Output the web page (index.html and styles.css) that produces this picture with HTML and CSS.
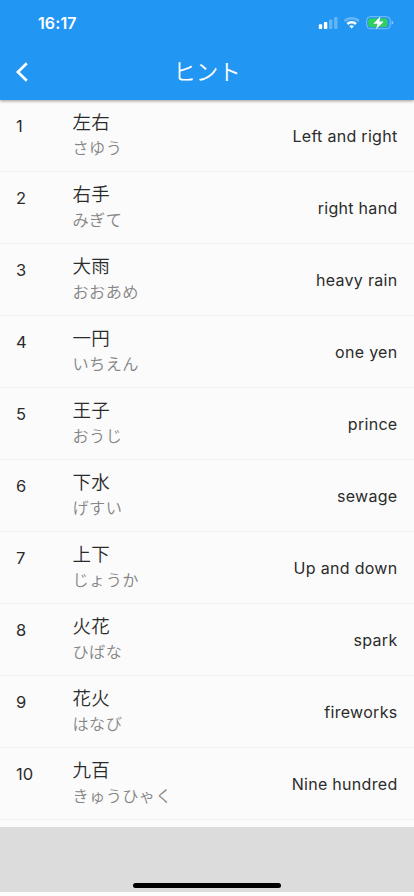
FILE: index.html
```
<!DOCTYPE html>
<html lang="ja">
<head>
<meta charset="utf-8">
<title>ヒント</title>
<link rel="stylesheet" href="styles.css">
</head>
<body>
<header class="top">
  <div class="status">
    <span class="time">16:17</span>
    <svg class="signals" width="76" height="16" viewBox="0 0 76 16" fill="#fff">
      <rect x="0.8" y="9.2" width="3.4" height="4.8" rx="0.8"/>
      <rect x="5.9" y="7" width="3.4" height="7" rx="0.8"/>
      <rect x="11" y="4.4" width="3.4" height="9.6" rx="0.8" opacity=".3"/>
      <rect x="16.1" y="2" width="3.4" height="12" rx="0.8" opacity=".3"/>
      <g fill="none" stroke="#fff" stroke-width="2.5">
        <path d="M26.5 6.1a10.4 10.4 0 0 1 14.4 0" opacity=".3"/>
        <path d="M29.4 9a6.2 6.2 0 0 1 8.6 0"/>
      </g>
      <path d="M31.3 11.1q2.4-1.8 4.8 0l-2.4 2.5z"/>
      <rect x="48.7" y="1.7" width="23.6" height="12" rx="3.6" fill="none" stroke="#fff" opacity=".4"/>
      <path d="M73.6 5.7q1.8.6 1.8 2t-1.8 2z" opacity=".45"/>
      <rect x="50.4" y="3.4" width="19" height="8.6" rx="2" fill="#30d158"/>
      <path d="M62.6 1.2l-7.4 7.5h4.3l-1.7 5.9 8-8h-4.5z" stroke="#2196f3" stroke-width=".4" paint-order="stroke"/>
    </svg>
  </div>
  <div class="nav">
    <svg class="back" width="16" height="22" viewBox="0 0 16 22"><path d="M12.8 2.3L3.9 11l8.9 8.7" fill="none" stroke="#fff" stroke-width="2.7"/></svg>
    <h1>ヒント</h1>
  </div>
</header>
<main>
  <div class="row"><span class="num">1</span><div class="word"><b>左右</b><i>さゆう</i></div><span class="en">Left and right</span></div>
  <div class="row"><span class="num">2</span><div class="word"><b>右手</b><i>みぎて</i></div><span class="en">right hand</span></div>
  <div class="row"><span class="num">3</span><div class="word"><b>大雨</b><i>おおあめ</i></div><span class="en">heavy rain</span></div>
  <div class="row"><span class="num">4</span><div class="word"><b>一円</b><i>いちえん</i></div><span class="en">one yen</span></div>
  <div class="row"><span class="num">5</span><div class="word"><b>王子</b><i>おうじ</i></div><span class="en">prince</span></div>
  <div class="row"><span class="num">6</span><div class="word"><b>下水</b><i>げすい</i></div><span class="en">sewage</span></div>
  <div class="row"><span class="num">7</span><div class="word"><b>上下</b><i>じょうか</i></div><span class="en">Up and down</span></div>
  <div class="row"><span class="num">8</span><div class="word"><b>火花</b><i>ひばな</i></div><span class="en">spark</span></div>
  <div class="row"><span class="num">9</span><div class="word"><b>花火</b><i>はなび</i></div><span class="en">fireworks</span></div>
  <div class="row"><span class="num">10</span><div class="word"><b>九百</b><i>きゅうひゃく</i></div><span class="en">Nine hundred</span></div>
</main>
<footer><div class="home"></div></footer>
</body>
</html>
```
FILE: styles.css
```
* { box-sizing: border-box; }
body {
  margin: 0;
  height: 896px;
  display: flex;
  flex-direction: column;
  overflow: hidden;
  background: #fbfbfb;
  color: #2b2b2b;
  font-family: Inter, "Noto Sans CJK JP", sans-serif;
}
.top {
  height: 100px;
  flex: none;
  background: #2196f3;
  color: #fff;
  box-shadow: 0 1px 3px rgba(0, 0, 0, .4);
  z-index: 1;
}
.status {
  height: 44px;
  padding: 14px 20px 0 38px;
  display: flex;
  justify-content: space-between;
}
.time { font-size: 16px; line-height: 18px; font-weight: 600; letter-spacing: .1px; }
.signals { margin-top: 1px; }
.nav {
  height: 56px;
  padding: 0 14px;
  display: grid;
  grid-template-columns: 16px 1fr 16px;
  align-items: center;
}
h1 {
  margin: 0;
  text-align: center;
  font-size: 22.5px;
  line-height: 32px;
  font-weight: 350;
}
main { height: 727px; flex: none; }
.row {
  height: 72px;
  padding: 0 16.5px 0 16px;
  display: flex;
  border-bottom: 1px solid #f0f0f0;
}
.num { width: 56.5px; padding-top: 14px; font-size: 16.5px; line-height: 24px; }
.word { flex: 1; padding-top: 8px; }
.word b, .word i { display: block; font-style: normal; font-weight: 350; }
.word b { font-size: 18.5px; line-height: 28px; letter-spacing: .3px; }
.word i { font-size: 16.2px; line-height: 24px; letter-spacing: .4px; color: #858585; }
.en { align-self: center; font-size: 16px; line-height: 24px; letter-spacing: .3px; font-weight: 380; }
footer {
  height: 65px;
  flex: none;
  background: #dcdcdc;
  display: flex;
  justify-content: center;
  align-items: flex-end;
  padding-bottom: 4px;
}
.home { width: 148px; height: 5px; border-radius: 3px; background: #000; }
```
